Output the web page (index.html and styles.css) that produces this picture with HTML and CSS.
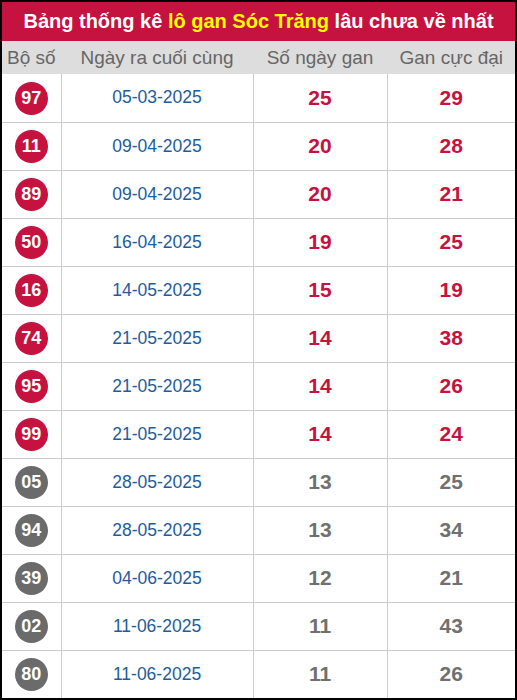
FILE: index.html
```html
<!DOCTYPE html>
<html lang="vi">
<head>
<meta charset="utf-8">
<link rel="stylesheet" href="styles.css">
</head>
<body>
<div class="box">
  <div class="title">Bảng thống kê <span class="hl">lô gan Sóc Trăng</span> lâu chưa về nhất</div>
  <table class="tbl">
    <colgroup>
      <col class="c1"><col class="c2"><col class="c3"><col class="c4">
    </colgroup>
    <thead>
      <tr><th>Bộ số</th><th>Ngày ra cuối cùng</th><th>Số ngày gan</th><th>Gan cực đại</th></tr>
    </thead>
    <tbody>
      <tr class="hot"><td><span class="ball">97</span></td><td class="date">05-03-2025</td><td class="num">25</td><td class="num">29</td></tr>
      <tr class="hot"><td><span class="ball">11</span></td><td class="date">09-04-2025</td><td class="num">20</td><td class="num">28</td></tr>
      <tr class="hot"><td><span class="ball">89</span></td><td class="date">09-04-2025</td><td class="num">20</td><td class="num">21</td></tr>
      <tr class="hot"><td><span class="ball">50</span></td><td class="date">16-04-2025</td><td class="num">19</td><td class="num">25</td></tr>
      <tr class="hot"><td><span class="ball">16</span></td><td class="date">14-05-2025</td><td class="num">15</td><td class="num">19</td></tr>
      <tr class="hot"><td><span class="ball">74</span></td><td class="date">21-05-2025</td><td class="num">14</td><td class="num">38</td></tr>
      <tr class="hot"><td><span class="ball">95</span></td><td class="date">21-05-2025</td><td class="num">14</td><td class="num">26</td></tr>
      <tr class="hot"><td><span class="ball">99</span></td><td class="date">21-05-2025</td><td class="num">14</td><td class="num">24</td></tr>
      <tr class="cold"><td><span class="ball">05</span></td><td class="date">28-05-2025</td><td class="num">13</td><td class="num">25</td></tr>
      <tr class="cold"><td><span class="ball">94</span></td><td class="date">28-05-2025</td><td class="num">13</td><td class="num">34</td></tr>
      <tr class="cold"><td><span class="ball">39</span></td><td class="date">04-06-2025</td><td class="num">12</td><td class="num">21</td></tr>
      <tr class="cold"><td><span class="ball">02</span></td><td class="date">11-06-2025</td><td class="num">11</td><td class="num">43</td></tr>
      <tr class="cold"><td><span class="ball">80</span></td><td class="date">11-06-2025</td><td class="num">11</td><td class="num">26</td></tr>
    </tbody>
  </table>
</div>
</body>
</html>
```
FILE: styles.css
```css
* { box-sizing: border-box; }
html, body { margin: 0; padding: 0; background: #fff; }
body { font-family: "Liberation Sans", Arial, sans-serif; }
.box {
  width: 517px;
  height: 700px;
  border: 2px solid #000;
  overflow: hidden;
}
.title {
  height: 39px;
  background: #c5123f;
  color: #fff;
  font-weight: bold;
  font-size: 20px;
  line-height: 39px;
  text-align: center;
  white-space: nowrap;
}
.hl { color: #ffff00; }
.tbl {
  width: 513px;
  border-collapse: collapse;
  table-layout: fixed;
}
.c1 { width: 59px; }
.c2 { width: 192px; }
.c3 { width: 134px; }
.c4 { width: 128px; }
.tbl th {
  height: 33px;
  background: #dddddd;
  color: #666;
  font-weight: normal;
  font-size: 19px;
  text-align: center;
  padding: 0;
  border-left: 1px solid #dddddd;
}
.tbl th:first-child { border-left: none; }
.tbl td {
  height: 48px;
  padding: 0;
  text-align: center;
  vertical-align: middle;
  border-left: 1px solid #cccccc;
  border-bottom: 1px solid #cccccc;
}
.tbl td:first-child { border-left: none; }
.tbl tbody tr:last-child td { border-bottom: none; }
.ball {
  display: inline-flex;
  align-items: center;
  justify-content: center;
  width: 33px;
  height: 33px;
  border-radius: 50%;
  color: #fff;
  font-weight: bold;
  font-size: 18px;
  margin-top: 1px;
}
.hot .ball { background: #c5123f; }
.cold .ball { background: #6b6b6b; }
.date { color: #1d5c9e; font-size: 17.5px; }
.num { font-weight: bold; font-size: 21px; }
.hot .num { color: #c5123f; }
.cold .num { color: #707070; }
```
